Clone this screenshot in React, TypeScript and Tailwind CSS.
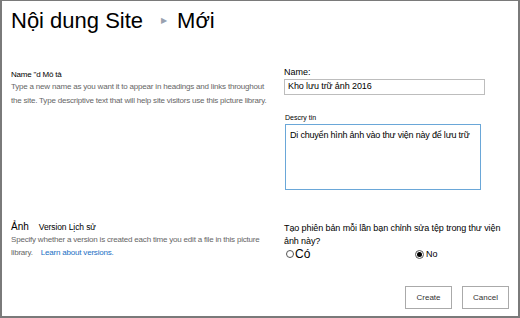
export default function App() {
  return (
    <div
      className="w-[520px] h-[318px] bg-white border-[#7a7a7a] border-l-2 border-r-2 border-t border-b-2 flex flex-col text-black"
      style={{ fontFamily: '"Liberation Sans", Arial, sans-serif' }}
    >
      {/* Title */}
      <div className="flex items-center pl-[9px] pt-[5px] h-[34px]">
        <span className="text-[22px] leading-none">Nội dung Site</span>
        <span className="ml-[18px] mr-[10px] text-[8px] text-gray-400">▶</span>
        <span className="text-[22px] leading-none">Mới</span>
      </div>

      {/* Name and description */}
      <div className="flex mt-[34px]">
        <div className="w-[272px] pl-[9px]">
          <p className="text-[8px] leading-[11px] tracking-[-0.2px]">Name "d Mô tả</p>
          <p className="text-[8px] leading-[14px] tracking-[-0.2px] text-[#666] whitespace-nowrap">
            Type a new name as you want it to appear in headings and links throughout
            <br />
            the site. Type descriptive text that will help site visitors use this picture library.
          </p>
        </div>
        <div className="flex-1 pl-[10px]">
          <p className="text-[9px] leading-[11px] -mt-[2px]">Name:</p>
          <div className="w-[201px] h-[16px] border border-[#bdbdbd] flex items-center px-[3px] text-[9px] tracking-[-0.1px] mt-[1px]">
            Kho lưu trữ ảnh 2016
          </div>
          <p className="text-[7px] leading-[9px] mt-[18px] ml-[1px]">Descry tin</p>
          <div className="w-[196px] h-[66px] border-[1.5px] border-[#6aa7d8] px-[4px] pt-[6px] text-[9px] tracking-[-0.2px] leading-none mt-[2px] ml-[1px] whitespace-nowrap">
            Di chuyển hình ảnh vào thư viện này để lưu trữ
          </div>
        </div>
      </div>

      {/* Versioning */}
      <div className="flex mt-[29px]">
        <div className="w-[272px] pl-[9px]">
          <p className="leading-[11px]">
            <span className="text-[10px]">Ảnh</span>
            <span className="ml-[10px] text-[8.5px] tracking-[-0.1px]">Version Lịch sử</span>
          </p>
          <p className="text-[8px] leading-[13px] tracking-[-0.2px] text-[#666] whitespace-nowrap">
            Specify whether a version is created each time you edit a file in this picture
            <br />
            library.
            <span className="ml-[8px] text-[#1a6fc4]">Learn about versions.</span>
          </p>
        </div>
        <div className="flex-1 pl-[10px] pt-[3px]">
          <p className="text-[9px] leading-[13px] tracking-[-0.1px] whitespace-nowrap">
            Tạo phiên bản mỗi lần bạn chỉnh sửa tệp trong thư viện
            <br />
            ảnh này?
          </p>
          <div className="flex items-center">
            <div className="flex items-center w-[131px]">
              <span className="w-[8px] h-[8px] rounded-full border border-[#555] bg-white ml-[2px]" />
              <span className="text-[12px] leading-none ml-[1px]">Có</span>
            </div>
            <div className="flex items-center">
              <span className="w-[9px] h-[9px] rounded-full border border-[#555] bg-white flex items-center justify-center">
                <span className="w-[5px] h-[5px] rounded-full bg-black" />
              </span>
              <span className="text-[9px] leading-none ml-[2px]">No</span>
            </div>
          </div>
        </div>
      </div>

      {/* Buttons */}
      <div className="flex justify-end gap-[10px] pr-[9px] mt-auto mb-[7px]">
        <button className="w-[47px] h-[23px] border border-[#aaa] bg-white text-[8px] text-[#333]">Create</button>
        <button className="w-[47px] h-[23px] border border-[#aaa] bg-white text-[8px] text-[#333]">Cancel</button>
      </div>
    </div>
  );
}
